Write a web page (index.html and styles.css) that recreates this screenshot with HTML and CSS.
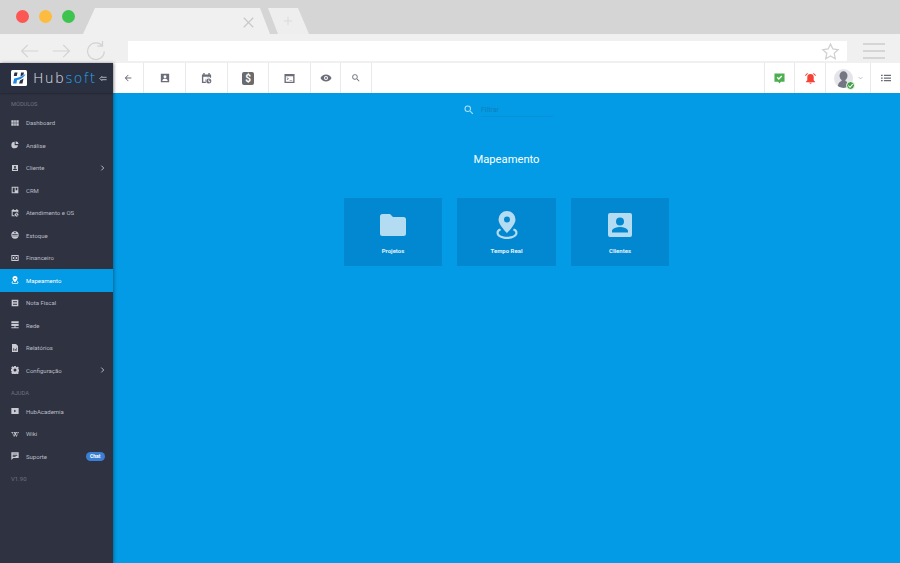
FILE: index.html
```html
<!DOCTYPE html>
<html lang="pt-BR">
<head>
    <meta charset="UTF-8">
    <title>Hubsoft - Mapeamento</title>
    <link rel="stylesheet" href="styles.css">
</head>
<body>

<!-- Browser frame -->
<div class="tabs-bar">
    <div class="lights">
        <span class="light red"></span>
        <span class="light yellow"></span>
        <span class="light green"></span>
    </div>
    <div class="tab">
        <svg class="tab-close" viewBox="0 0 14 14"><path d="M1 1l12 12M13 1L1 13"/></svg>
    </div>
    <div class="tab-new">
        <svg class="tab-plus" viewBox="0 0 12 12"><path d="M6 1v10M1 6h10"/></svg>
    </div>
</div>
<div class="address-bar">
    <svg class="nav-icon" viewBox="0 0 24 20"><path d="M22 10H3M10 3l-7 7 7 7"/></svg>
    <svg class="nav-icon" viewBox="0 0 24 20"><path d="M2 10h19M14 3l7 7-7 7"/></svg>
    <svg class="nav-icon reload" viewBox="0 0 24 24"><path d="M20 7a9.500 9.500 0 1 0 2 6M20 1v6h-6"/></svg>
    <div class="url">
        <svg class="star" viewBox="0 0 24 24"><path d="M12 2.500l2.900 6.300 6.800.8-5 4.700 1.300 6.800-6-3.400-6 3.400 1.300-6.800-5-4.700 6.800-.8z"/></svg>
    </div>
    <div class="burger"><i></i><i></i><i></i></div>
</div>

<div class="app">
    <aside class="sidebar">
        <div class="brand">
            <svg class="brand-logo" viewBox="0 0 16 16">
                <rect width="16" height="16" rx="1.500" fill="#fff"/>
                <path d="M3.500 2.500h3L5.800 6H2.800zM10 2.500h3l-.6 2.500L9.500 6.500zM9 10.500l3.500-2-1 5H8z" fill="#2b3040"/>
                <path d="M2 13.500l1.200-5C6 8 10 7 14.500 4c-2 4-5 5.500-8.500 6L5.500 13.500z" fill="#1e88e5"/>
            </svg>
            <span class="brand-name">Hub<b>soft</b></span>
            <svg class="brand-toggle" viewBox="0 0 10 8"><path d="M9.500 2.500H3M9.500 5.500H3M4 1L1 4l3 3"/></svg>
        </div>

        <div class="side-label">MÓDULOS</div>
        <a class="side-item">
            <svg viewBox="0 0 24 24"><path d="M1 4h7v7H1zM9.500 4h5v7h-5zM16 4h7v7h-7zM1 13h7v7H1zM9.500 13h5v7h-5zM16 13h7v7h-7z"/></svg>
            <span>Dashboard</span>
        </a>
        <a class="side-item">
            <svg viewBox="0 0 24 24"><path d="M11 2a10 10 0 1 0 10 11h-10zM14 1v8h9a10 10 0 0 0-9-8z"/></svg>
            <span>Análise</span>
        </a>
        <a class="side-item">
            <svg viewBox="0 0 24 24"><path fill-rule="evenodd" d="M3 3h18v18H3zM12 6a3 3 0 1 0 0 6 3 3 0 0 0 0-6zM6 18h12c0-3-3-4.500-6-4.500S6 15 6 18z"/></svg>
            <span>Cliente</span>
            <svg class="chevron" viewBox="0 0 8 10"><path d="M2 1l4 4-4 4"/></svg>
        </a>
        <a class="side-item">
            <svg viewBox="0 0 24 24"><path fill-rule="evenodd" d="M2 2h20v20H2zM5 5v14h6V5zM14 5v8h5V5z"/></svg>
            <span>CRM</span>
        </a>
        <a class="side-item">
            <svg viewBox="0 0 24 24"><path fill-rule="evenodd" d="M5 0h3v3h8V0h3v3h3v8.500A7 7 0 0 0 11.500 22H2V3h3zM5 8v11h5.500A7 7 0 0 1 19 9.500V8zM17 12a5.500 5.500 0 1 0 0 11 5.500 5.500 0 0 0 0-11zM16 14h2v3.500l2.500 1.500-1 1.500-3.500-2z"/></svg>
            <span>Atendimento e OS</span>
        </a>
        <a class="side-item">
            <svg viewBox="0 0 24 24"><path fill-rule="evenodd" d="M12 1a11 11 0 1 0 0 22 11 11 0 0 0 0-22zM4 9h16v2H4zM4 14h16v2H4zM10 3h4v4h-4z"/></svg>
            <span>Estoque</span>
        </a>
        <a class="side-item">
            <svg viewBox="0 0 24 24"><path fill-rule="evenodd" d="M1 3h22v18H1zM4 6v12h7V6zM13 6v12h7V6zM6 9h3v6H6zM15 9h3v6h-3z"/></svg>
            <span>Financeiro</span>
        </a>
        <a class="side-item active">
            <svg viewBox="0 0 24 24"><path fill-rule="evenodd" d="M12 0a7.500 7.500 0 0 0-7.500 7.500C4.500 12.500 12 19 12 19s7.500-6.500 7.500-11.500A7.500 7.500 0 0 0 12 0zM12 5a2.500 2.500 0 1 1 0 5 2.500 2.500 0 0 1 0-5zM5 16c-3 1-3 3-3 4 0 2.500 4 4 10 4s10-1.500 10-4c0-1 0-3-3-4l-1 2c1 .5 1.500 1 1.500 2 0 1-3 2-7.500 2s-7.500-1-7.500-2c0-1 .5-1.500 1.500-2z"/></svg>
            <span>Mapeamento</span>
        </a>
        <a class="side-item">
            <svg viewBox="0 0 24 24"><path fill-rule="evenodd" d="M2 2h20v20H2zM6 7v2h12V7zM6 11v2h12v-2zM6 15v2h12v-2z"/></svg>
            <span>Nota Fiscal</span>
        </a>
        <a class="side-item">
            <svg viewBox="0 0 24 24"><path d="M1 1h22v6H1zM1 9h22v6H1zM10.500 15h3v4H23v3H1v-3h9.500z"/></svg>
            <span>Rede</span>
        </a>
        <a class="side-item">
            <svg viewBox="0 0 24 24"><path fill-rule="evenodd" d="M3 0h12l6 6v18H3zM7 13v7h2.500v-7zM11.500 15v5H14v-5zM16 11v9h1.500v-9z"/></svg>
            <span>Relatórios</span>
        </a>
        <a class="side-item">
            <svg viewBox="0 0 24 24"><path fill-rule="evenodd" d="M9.500 0h5l.6 3.200 2.200 1 2.700-1.900 3.500 3.500-1.900 2.700 1 2.200 3.200.6v5l-3.200.6-1 2.200 1.900 2.700-3.500 3.500-2.700-1.900-2.200 1-.6 3.200h-5l-.6-3.200-2.200-1-2.700 1.900L.7 20.800l1.900-2.700-1-2.200L-1.600 15.300v-5l3.200-.6 1-2.200L.7 4.800l3.500-3.500 2.700 1.900 2.200-1zM12 8a4.500 4.500 0 1 0 0 9 4.500 4.500 0 0 0 0-9z" transform="translate(0 -0.500)"/></svg>
            <span>Configuração</span>
            <svg class="chevron" viewBox="0 0 8 10"><path d="M2 1l4 4-4 4"/></svg>
        </a>

        <div class="side-label">AJUDA</div>
        <a class="side-item">
            <svg viewBox="0 0 24 24"><path fill-rule="evenodd" d="M1 3h22v18H1zM9.500 8v8l6.500-4z"/></svg>
            <span>HubAcademia</span>
        </a>
        <a class="side-item">
            <svg viewBox="0 0 24 24"><path d="M0 6h7v1.500H5L9 17l2-4.500L9 7.500H8V6h5.500v1.500h-1l1.200 2.500 1.300-2.500h-1V6h5v1.500h-1.500l-2.500 4.500 2.200 5 4-9.500H19V6h5v1.500h-1.500L17 20h-1.200l-2.800-6-3 6H8.800L3 7.500H0z"/></svg>
            <span>Wiki</span>
        </a>
        <a class="side-item">
            <svg viewBox="0 0 24 24"><path fill-rule="evenodd" d="M1 1h22v17H7l-6 6zM5 5v2h14V5zM5 9v2h14V9zM5 13v2h9v-2z"/></svg>
            <span>Suporte</span>
            <em class="chat-badge">Chat</em>
        </a>
        <div class="side-version">V1.90</div>
    </aside>

    <div class="main">
        <header class="toolbar">
            <a class="tool tool-back"><svg viewBox="0 0 24 24"><path d="M20 11H7.800l5.600-5.600L12 4l-8 8 8 8 1.400-1.400L7.800 13H20z"/></svg></a>
            <a class="tool tool-wide"><svg viewBox="0 0 24 24"><path fill-rule="evenodd" d="M2 2h20v20H2zM12 5.500a3.500 3.500 0 1 0 0 7 3.500 3.500 0 0 0 0-7zM5.500 19h13c0-3.500-3.500-5-6.500-5s-6.500 1.500-6.500 5z"/></svg></a>
            <a class="tool tool-wide"><svg class="icon-large" viewBox="0 0 24 24"><path fill-rule="evenodd" d="M5 0h3v3h8V0h3v3h3v8.500A7 7 0 0 0 11.500 22H2V3h3zM5 8v11h5.500A7 7 0 0 1 19 9.500V8zM17 12a5.500 5.500 0 1 0 0 11 5.500 5.500 0 0 0 0-11zM16 14h2v3.500l2.500 1.500-1 1.500-3.500-2z"/></svg></a>
            <a class="tool tool-mid"><span class="dollar">$</span></a>
            <a class="tool tool-wide"><svg class="icon-large" viewBox="0 0 24 24"><path fill-rule="evenodd" d="M1 2h22v20H1zM4 7v12h16V7zM6 9l5 3.500L6 16v-2l2.500-1.500L6 11zM12 15h6v1.500h-6z"/></svg></a>
            <a class="tool tool-eye"><svg viewBox="0 0 24 24"><path fill-rule="evenodd" d="M12 5C7 5 3 8 1 12c2 4 6 7 11 7s9-3 11-7c-2-4-6-7-11-7zM12 8a4 4 0 1 1 0 8 4 4 0 0 1 0-8zM12 10a2 2 0 1 0 0 4 2 2 0 0 0 0-4z"/></svg></a>
            <a class="tool tool-search"><svg viewBox="0 0 24 24"><path fill-rule="evenodd" d="M15.500 14h-.79l-.28-.27A6.470 6.470 0 0 0 16 9.500 6.500 6.500 0 1 0 9.500 16c1.610 0 3.090-.59 4.230-1.570l.27.28v.79l5 4.990L20.490 19zM9.500 14A4.500 4.500 0 1 1 9.500 5a4.500 4.500 0 0 1 0 9z"/></svg></a>
            <div class="toolbar-fill"></div>
            <a class="tool tool-msg"><svg viewBox="0 0 24 24"><path d="M1 1h22v18h-8l-3 4-3-4H1z" fill="#4caf50"/><path d="M7 9.500l3.500 3.500L17 6.500" class="tick"/></svg></a>
            <a class="tool tool-bell"><svg viewBox="0 0 24 24"><path d="M12 2a7 7 0 0 0-7 7v7l-3 3v1h20v-1l-3-3V9a7 7 0 0 0-7-7zM9.500 21h5a2.500 2.500 0 0 1-5 0zM5 0L0 5l1.500 1.500 5-5zM19 0l5 5-1.500 1.500-5-5z" fill="#f44336"/></svg></a>
            <a class="tool tool-user">
                <span class="avatar">
                    <svg viewBox="0 0 20 20"><path d="M10 2.500a4.200 4.200 0 0 0-4.200 4.500c0 2 1 3.500 2.200 4.500v1C6 13.500 4 14.500 4 20h12c0-5.500-2-6.500-4-7.500v-1c1.200-1 2.200-2.500 2.200-4.500A4.200 4.200 0 0 0 10 2.500z"/></svg>
                    <span class="avatar-ok"><svg viewBox="0 0 8 8"><path d="M1.500 4l2 2 3-3.500"/></svg></span>
                </span>
                <svg class="caret" viewBox="0 0 8 5"><path d="M1 1l3 3 3-3"/></svg>
            </a>
            <a class="tool tool-list"><svg viewBox="0 0 24 24"><path d="M0 4h4v3H0zM7 4h17v3H7zM0 10.500h4v3H0zM7 10.500h17v3H7zM0 17h4v3H0zM7 17h17v3H7z"/></svg></a>
        </header>

        <main class="content">
            <div class="filter">
                <svg viewBox="0 0 24 24"><path fill-rule="evenodd" d="M15.500 14h-.79l-.28-.27A6.470 6.470 0 0 0 16 9.500 6.500 6.500 0 1 0 9.500 16c1.610 0 3.090-.59 4.230-1.570l.27.28v.79l5 4.990L20.490 19zM9.500 14A4.500 4.500 0 1 1 9.500 5a4.500 4.500 0 0 1 0 9z"/></svg>
                <div class="filter-input">Filtrar</div>
            </div>
            <h1 class="page-title">Mapeamento</h1>
            <div class="cards">
                <a class="card">
                    <svg viewBox="0 0 26 28"><path d="M2.500 3h7.500l3 3h10.500A2.500 2.500 0 0 1 26 8.500v14a2.500 2.500 0 0 1-2.500 2.500h-21A2.500 2.500 0 0 1 0 22.500v-17A2.500 2.500 0 0 1 2.500 3z"/></svg>
                    <span>Projetos</span>
                </a>
                <a class="card">
                    <svg viewBox="0 0 26 28"><path fill-rule="evenodd" d="M13 0a8.500 8.500 0 0 0-8.500 8.500C4.500 14 13 22 13 22s8.500-8 8.500-13.500A8.500 8.500 0 0 0 13 0zM13 5.500a3 3 0 1 1 0 6 3 3 0 0 1 0-6zM6 17.500C3 18.500 2.500 20 2.500 22c0 3.500 5 6 10.500 6s10.500-2.500 10.500-6c0-2-.5-3.500-3.500-4.500l-1.200 1.800c1.800.7 2.500 1.500 2.500 2.700 0 2-3.500 3.800-8.300 3.800s-8.300-1.800-8.300-3.800c0-1.200.7-2 2.500-2.700z"/></svg>
                    <span>Tempo Real</span>
                </a>
                <a class="card">
                    <svg viewBox="0 0 26 28"><path fill-rule="evenodd" d="M3 2h20a2 2 0 0 1 2 2v20a2 2 0 0 1-2 2H3a2 2 0 0 1-2-2V4a2 2 0 0 1 2-2zM13 6.500a4 4 0 1 0 0 8 4 4 0 0 0 0-8zM5 21.500h16V20c0-2.700-5.300-4-8-4s-8 1.300-8 4z"/></svg>
                    <span>Clientes</span>
                </a>
            </div>
        </main>
    </div>
</div>

</body>
</html>
```

FILE: styles.css
```css
/* General */
html, body {
    margin: 0;
    padding: 0;
    height: 100%;
    overflow: hidden;
}

body {
    font-family: Roboto, sans-serif;
    display: flex;
    flex-direction: column;
    background: #039be5;
}

a {
    color: inherit;
}

/* Browser frame */
.tabs-bar {
    height: 34px;
    flex: none;
    display: flex;
    background: #d5d5d5;
}

.lights {
    width: 83px;
    display: flex;
    gap: 10px;
    padding: 10px 0 0 16px;
    box-sizing: border-box;
}

.light {
    width: 13px;
    height: 13px;
    border-radius: 50%;
}

.red { background: #fc5753; }
.yellow { background: #fdbc40; }
.green { background: #3dc44f; }

.tab {
    width: 187px;
    height: 26px;
    margin-top: 8px;
    background: #f0f0f0;
    clip-path: polygon(12px 0, 177px 0, 187px 26px, 0 26px);
    position: relative;
}

.tab-close {
    position: absolute;
    left: 160px;
    top: 9px;
    width: 11px;
    height: 11px;
    fill: none;
    stroke: #c9c9c9;
    stroke-width: 1.6;
}

.tab-new {
    width: 41px;
    height: 26px;
    margin: 8px 0 0 -2px;
    background: #eeeeee;
    clip-path: polygon(0 0, 30px 0, 41px 26px, 10px 26px);
    position: relative;
}

.tab-plus {
    position: absolute;
    left: 15px;
    top: 8px;
    width: 10px;
    height: 10px;
    fill: none;
    stroke: #dadada;
    stroke-width: 1.2;
}

.address-bar {
    height: 29px;
    flex: none;
    display: flex;
    align-items: center;
    background: #f0f0f0;
    padding: 4px 0 0 19px;
    box-sizing: border-box;
    gap: 11px;
}

.nav-icon {
    width: 21px;
    height: 18px;
    fill: none;
    stroke: #d3d3d3;
    stroke-width: 1.4;
    flex: none;
}

.nav-icon.reload {
    width: 21px;
    height: 21px;
    margin-left: 2px;
}

.url {
    flex: 1;
    height: 20px;
    margin-left: 11px;
    margin-top: 1px;
    background: #fff;
    display: flex;
    justify-content: flex-end;
    align-items: center;
    padding-right: 7px;
}

.star {
    width: 19px;
    height: 19px;
    fill: none;
    stroke: #d0d0d0;
    stroke-width: 1.6;
}

.burger {
    width: 53px;
    flex: none;
    margin-left: -11px;
    display: flex;
    flex-direction: column;
    align-items: center;
    gap: 5px;
}

.burger i {
    width: 22px;
    height: 2px;
    background: #d5d5d5;
}

/* App */
.app {
    flex: 1;
    display: flex;
    min-height: 0;
}

/* Sidebar */
.sidebar {
    width: 113px;
    flex: none;
    background: #2f3241;
    color: #b9bcc4;
    position: relative;
    z-index: 2;
    box-shadow: 1px 0 3px rgba(0, 0, 0, 0.35);
}

.brand {
    height: 30px;
    display: flex;
    align-items: center;
    background: #2b3040;
    padding-left: 11px;
    box-shadow: 0 1px 2px rgba(0, 0, 0, 0.25);
}

.brand-logo {
    width: 16px;
    height: 16px;
    flex: none;
}

.brand-name {
    font-family: "DejaVu Sans", sans-serif;
    font-size: 14px;
    letter-spacing: 1.300px;
    color: #e4e6ea;
    margin-left: 6px;
    font-weight: 200;
}

.brand-name b {
    color: #29a8f0;
    font-weight: 200;
}

.brand-toggle {
    width: 8px;
    height: 7px;
    margin-left: 3px;
    fill: none;
    stroke: #d0d2d8;
    stroke-width: 1;
}

.side-label,
.side-item,
.side-version {
    display: flex;
    align-items: center;
    box-sizing: border-box;
}

.side-label {
    height: 18.500px;
    padding: 4px 0 0 11px;
    font-size: 5.700px;
    color: #6f7380;
}

.side-version {
    height: 22.500px;
    padding-left: 11px;
    font-size: 6px;
    color: #6f7380;
}

.side-item {
    height: 22.500px;
    font-size: 6px;
    padding: 0 8px 0 11px;
}

.side-item svg {
    width: 8px;
    height: 8px;
    fill: #c9cbd1;
    flex: none;
}

.side-item span {
    margin-left: 7px;
    flex: 1;
}

.side-item .chevron {
    width: 5px;
    height: 6px;
    fill: none;
    stroke: #c9cbd1;
    stroke-width: 1.5;
}

.side-item.active {
    background: #039be5;
    color: #fff;
}

.side-item.active svg {
    fill: #fff;
}

.chat-badge {
    font-style: normal;
    font-size: 5px;
    font-weight: 700;
    line-height: 6px;
    color: #fff;
    background: #3a7fd5;
    border-radius: 5px;
    padding: 1.500px 4.500px;
}

/* Toolbar */
.main {
    flex: 1;
    display: flex;
    flex-direction: column;
    min-width: 0;
}

.toolbar {
    height: 30px;
    flex: none;
    display: flex;
    background: #fff;
}

.toolbar-fill {
    flex: 1;
}

.tool {
    display: flex;
    align-items: center;
    justify-content: center;
    border-right: 1px solid #e9e9e9;
    box-sizing: border-box;
    flex: none;
}

.tool svg {
    width: 10px;
    height: 10px;
    fill: #6b6e7a;
}

.tool .icon-large {
    width: 11px;
    height: 11px;
}

.tool-back { width: 31px; }
.tool-wide { width: 42px; }
.tool-mid { width: 41px; }
.tool-eye { width: 30px; }
.tool-search { width: 31px; }
.tool-msg { width: 31px; border-left: 1px solid #e9e9e9; }
.tool-bell { width: 31px; }
.tool-user { width: 45px; gap: 5px; }
.tool-list { width: 29px; border-right: 0; }

.tool-eye svg { width: 12px; height: 12px; }
.tool-msg svg, .tool-bell svg { width: 11px; height: 11px; }

.tick {
    fill: none;
    stroke: #fff;
    stroke-width: 3;
}

.dollar {
    width: 12px;
    height: 13px;
    background: #6b6b6e;
    border-radius: 2px;
    color: #fff;
    font-size: 10px;
    font-weight: 700;
    text-align: center;
    line-height: 13px;
}

.avatar {
    width: 19px;
    height: 19px;
    border-radius: 50%;
    background: #e4e5ea;
    position: relative;
    display: flex;
    justify-content: center;
}

.tool .avatar > svg {
    width: 19px;
    height: 19px;
    fill: #747782;
    border-radius: 50%;
}

.avatar-ok {
    position: absolute;
    right: -2px;
    bottom: -2px;
    width: 7px;
    height: 7px;
    display: flex;
    border-radius: 50%;
    background: #43a047;
    border: 1px solid #fff;
}

.tool .avatar-ok svg {
    width: 7px;
    height: 7px;
    fill: none;
    stroke: #fff;
    stroke-width: 1.200;
}

.tool .caret {
    width: 5px;
    height: 4px;
    fill: none;
    stroke: #9a9ca5;
    stroke-width: 1;
}

/* Content */
.content {
    flex: 1;
    background: #039be5;
    display: flex;
    flex-direction: column;
    align-items: center;
}

.filter {
    display: flex;
    align-items: center;
    gap: 6px;
    height: 24px;
    margin-top: 5px;
    margin-left: 3px;
}

.filter svg {
    width: 12px;
    height: 12px;
    fill: #b3e0f7;
}

.filter-input {
    width: 72px;
    height: 12px;
    font-size: 7px;
    line-height: 12px;
    color: #0d7fbd;
    border-bottom: 1px solid #0a90d6;
}

.page-title {
    margin: 31px 0 0;
    font-size: 11.200px;
    line-height: 14px;
    font-weight: 400;
    color: #fff;
}

.cards {
    display: flex;
    gap: 15px;
    margin-top: 31px;
}

.card {
    width: 98.500px;
    height: 68px;
    background: #0288d1;
    display: flex;
    flex-direction: column;
    align-items: center;
    color: #e1f3fc;
    font-size: 6px;
    font-weight: 700;
}

.card svg {
    height: 28px;
    width: 26px;
    margin-top: 13px;
    fill: #b3dcf2;
}

.card span {
    margin-top: 8px;
}
```
